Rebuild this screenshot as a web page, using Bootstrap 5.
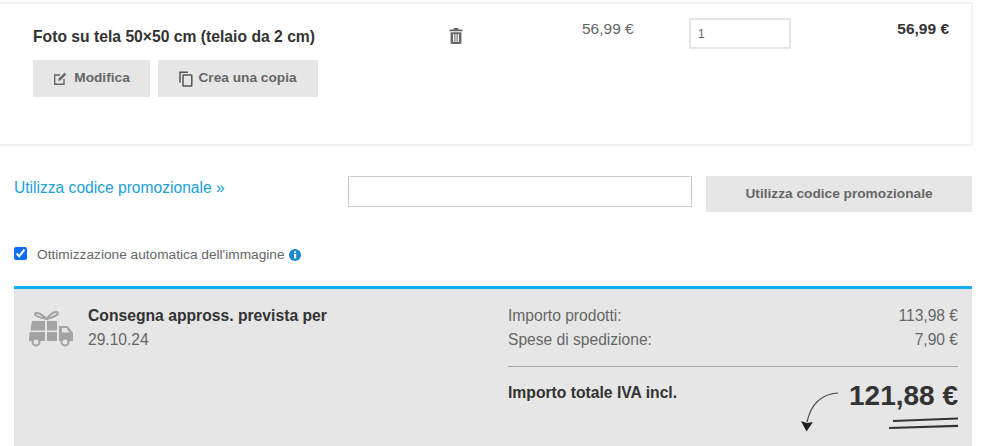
<!DOCTYPE html>
<html lang="it">
<head>
  <meta charset="UTF-8">
  <title>Carrello</title>
  <link href="https://cdn.jsdelivr.net/npm/bootstrap@5.3.0/dist/css/bootstrap.min.css" rel="stylesheet">
  <style>
    body { font-family: "Liberation Sans", Arial, sans-serif; color: #666; background: #fff; width: 990px; height: 446px; overflow: hidden; }
    .cart-wrap { width: 973px; padding-top: 2px; }
    .cart-item { height: 144px; border-top: 2px solid #f2f2f2; border-bottom: 2px solid #f2f2f2; border-right: 2px solid #f2f2f2; padding: 14px 22px 0 33px; }
    .item-main { width: 416px; }
    .item-title { font-size: 15.7px; font-weight: 700; color: #333; line-height: 16px; margin-top: 11px; margin-bottom: 15px; white-space: nowrap; }
    .grey-btn { background: #e6e6e6; border: 0; border-radius: 0; color: #666; font-size: 13.7px; font-weight: 700; height: 37px; padding: 0; display: flex; align-items: center; justify-content: center; gap: 7px; }
    .grey-btn:hover { background: #e6e6e6; color: #666; }
    .btn-edit { width: 117px; }
    .btn-copy { width: 160px; gap: 5px; }
    .item-trash { width: 133px; padding-top: 10px; }
    .item-price { width: 107px; font-size: 15.5px; line-height: 16px; padding-top: 3px; color: #666; white-space: nowrap; }
    .item-qty { width: 102px; height: 31px; border: 2px solid #e6e6e6; border-radius: 0; padding: 0 7px; font-size: 12px; color: #666; }
    .item-total { flex: 1; text-align: right; font-size: 15.5px; font-weight: 700; color: #333; line-height: 16px; padding-top: 3px; }
    .promo-row { padding: 30px 0 0 14px; }
    .promo-link { width: 334px; color: #1a9fdb; font-size: 15.6px; line-height: 18px; text-decoration: none; padding-top: 3px; white-space: nowrap; }
    .promo-input { width: 344px; height: 31px; border: 1px solid #ccc; border-radius: 0; }
    .promo-btn { width: 266px; height: 36px; margin-left: 14px; }
    .optim-row { padding: 35px 0 0 14px; font-size: 13.7px; line-height: 16px; color: #666; height: 74px; }
    .optim-row input { width: 13px; height: 13px; margin: 0 10px 0 0; accent-color: #0d6efd; }
    .optim-row svg { margin-top: 2px; }
    .summary-box { margin-left: 14px; width: 958px; height: 160px; background: #e6e6e6; border-top: 3px solid #14aeff; padding: 17px 14px 0 10px; }
    .ship-col { width: 484px; }
    .ship-text { margin-left: 8px; padding-top: 1px; }
    .ship-title { font-size: 15.7px; font-weight: 700; color: #333; line-height: 18px; }
    .ship-date { font-size: 15.6px; line-height: 18px; margin-top: 6px; }
    .cost-col { flex: 1; font-size: 15.6px; line-height: 24px; margin-top: -2px; }
    .cost-sep { border-top: 1px solid #aaa; margin: 14px 0 14px; }
    .total-label { font-weight: 700; color: #333; font-size: 15.7px; line-height: 18px; padding-top: 3px; }
    .total-amount { font-size: 28px; font-weight: 700; color: #333; line-height: 30px; text-align: right; white-space: nowrap; }
    .total-box { position: relative; }
    .total-arrow { position: absolute; left: -49px; top: 11px; }
    .total-lines { position: absolute; right: 0; top: 36px; }
  </style>
</head>
<body>
  <div class="cart-wrap">
    <div class="cart-item d-flex align-items-start">
      <div class="item-main">
        <div class="item-title">Foto su tela 50×50 cm (telaio da 2 cm)</div>
        <div class="d-flex gap-2">
          <button class="btn grey-btn btn-edit">
            <svg width="14" height="14" viewBox="0 0 14 14" fill="none" stroke="#666" stroke-width="1.4"><path d="M7 3H1.700v9.300H11V7"/><path d="M5.500 8.500 6 6.400 11.600 1l1.400 1.400L7.600 7.900z" fill="#666" stroke-width=".6"/></svg>
            Modifica
          </button>
          <button class="btn grey-btn btn-copy">
            <svg width="14" height="16" viewBox="0 0 14 16" fill="none" stroke="#555" stroke-width="1.5"><path d="M1 11.500V1.200h8"/><rect x="4" y="4" width="8.800" height="11" rx=".6"/></svg>
            Crea una copia
          </button>
        </div>
      </div>
      <div class="item-trash">
        <svg class="d-block" width="14" height="16" viewBox="0 0 14 16" fill="#666"><path d="M5 0h4l.6 1.600H13.500v1.600H.5V1.600h3.900z"/><path d="M1.600 4.200h10.800V15a1 1 0 0 1-1 1H2.600a1 1 0 0 1-1-1zM4 6v8h1.300V6zm2.400 0v8h1.200V6zm2.300 0v8H10V6z" fill-rule="evenodd"/></svg>
      </div>
      <div class="item-price">56,99 €</div>
      <input class="form-control item-qty" type="text" value="1">
      <div class="item-total">56,99 €</div>
    </div>

    <div class="promo-row d-flex align-items-start">
      <a href="#" class="promo-link">Utilizza codice promozionale »</a>
      <input class="form-control promo-input" type="text">
      <button class="btn grey-btn promo-btn">Utilizza codice promozionale</button>
    </div>

    <div class="optim-row d-flex align-items-start">
      <input type="checkbox" checked>
      <span>Ottimizzazione automatica dell'immagine</span>
      <svg class="ms-1" width="12" height="12" viewBox="0 0 12 12"><circle cx="6" cy="6" r="6" fill="#1b87c9"/><rect x="5" y="5" width="2.200" height="4.400" fill="#fff"/><rect x="5" y="2.400" width="2.200" height="1.800" fill="#fff"/></svg>
    </div>

    <div class="summary-box d-flex">
      <div class="ship-col d-flex">
        <svg width="56" height="46" viewBox="0 0 56 46" class="flex-shrink-0">
          <path d="M23 13C18 12 11 10 11 8c0-2 4-1 7 1l5 4c2-4 6-7 9-7 3 0 2 3-1 4-2 1-5 2-8 3" fill="none" stroke="#a3a3a3" stroke-width="2"/>
          <path d="M8 15h13v9.500H6.500zM23 15h10v9.500H23zM5.500 26H21v9H5zM23 26h10v9H23z" fill="#a3a3a3"/>
          <path d="M35 20h8.500l5.500 7v8H35z" fill="#a3a3a3"/>
          <path d="M38 22h4.500l3 4.500H38z" fill="#e6e6e6"/>
          <circle cx="12" cy="36" r="3.500" fill="#e6e6e6" stroke="#a3a3a3" stroke-width="2"/>
          <circle cx="41" cy="36" r="3.500" fill="#e6e6e6" stroke="#a3a3a3" stroke-width="2"/>
        </svg>
        <div class="ship-text">
          <div class="ship-title text-nowrap">Consegna appross. prevista per</div>
          <div class="ship-date">29.10.24</div>
        </div>
      </div>
      <div class="cost-col">
        <div class="d-flex justify-content-between"><span>Importo prodotti:</span><span>113,98 €</span></div>
        <div class="d-flex justify-content-between"><span>Spese di spedizione:</span><span>7,90 €</span></div>
        <div class="cost-sep"></div>
        <div class="d-flex justify-content-between">
          <div class="total-label">Importo totale IVA incl.</div>
          <div class="total-box">
            <svg class="total-arrow" width="40" height="42" viewBox="0 0 40 42" fill="none"><path d="M38 1C22 2 11 12 7 30" stroke="#444" stroke-width="1.200"/><path d="M1 29l6 2 6-1-6.500 9.500z" fill="#222"/></svg>
            <div class="total-amount">121,88 €</div>
            <svg class="total-lines" width="69" height="14" viewBox="0 0 69 14" fill="none" stroke="#333" stroke-width="2.200"><path d="M4 4 69 1.500"/><path d="M0 11 69 8.800"/></svg>
          </div>
        </div>
      </div>
    </div>
  </div>
  <script src="https://cdn.jsdelivr.net/npm/bootstrap@5.3.0/dist/js/bootstrap.bundle.min.js"></script>
</body>
</html>
